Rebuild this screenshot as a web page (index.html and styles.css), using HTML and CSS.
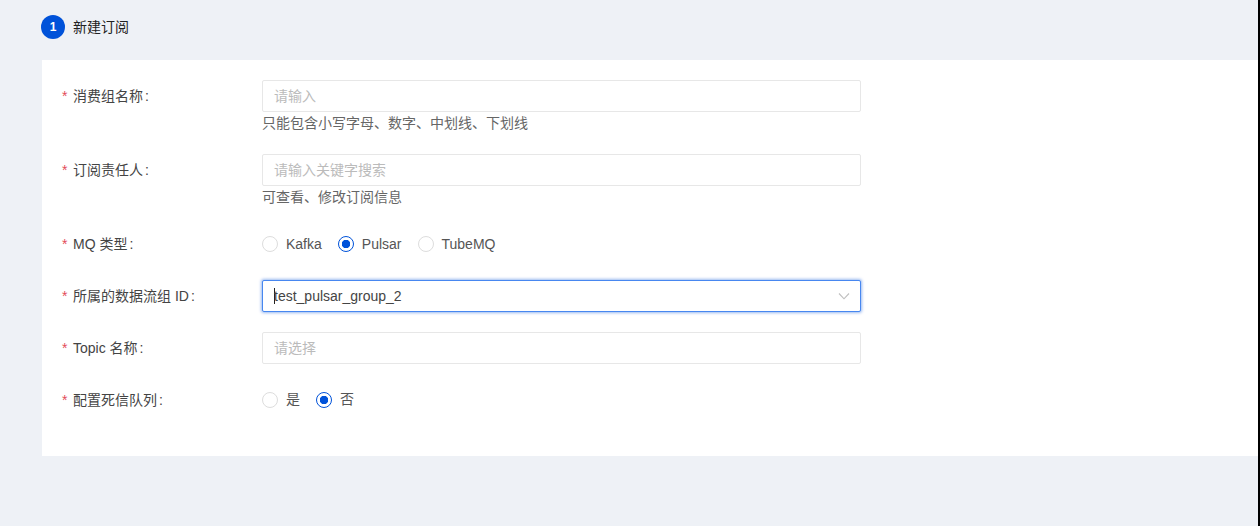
FILE: index.html
```html
<!DOCTYPE html>
<html lang="zh-CN">
<head>
<meta charset="utf-8">
<title>新建订阅</title>
<link rel="stylesheet" href="styles.css">
</head>
<body>
<div class="page">
  <main class="main">
    <div class="steps">
      <span class="step-num">1</span>
      <span class="step-title">新建订阅</span>
    </div>
    <form class="card">
      <div class="item help-item">
        <label class="label"><i class="star">*</i>消费组名称<span class="colon">:</span></label>
        <div class="control">
          <div class="input placeholder"><span class="cjk">请输入</span></div>
          <div class="help">只能包含小写字母、数字、中划线、下划线</div>
        </div>
      </div>
      <div class="item help-item">
        <label class="label"><i class="star">*</i>订阅责任人<span class="colon">:</span></label>
        <div class="control">
          <div class="input placeholder"><span class="cjk">请输入关键字搜索</span></div>
          <div class="help">可查看、修改订阅信息</div>
        </div>
      </div>
      <div class="item">
        <label class="label"><i class="star">*</i>MQ 类型<span class="colon">:</span></label>
        <div class="control radios">
          <span class="radio"><span class="dot"></span>Kafka</span>
          <span class="radio on"><span class="dot"></span>Pulsar</span>
          <span class="radio"><span class="dot"></span>TubeMQ</span>
        </div>
      </div>
      <div class="item">
        <label class="label"><i class="star">*</i>所属的数据流组 ID<span class="colon">:</span></label>
        <div class="control">
          <div class="input focused"><span class="caret"></span><span class="value">test_pulsar_group_2</span>
            <svg class="arrow" width="12" height="12" viewBox="0 0 12 12" fill="none"><path d="M1 3.5 6 8.8 11 3.5" stroke="#bfbfbf" stroke-width="1.1"/></svg>
          </div>
        </div>
      </div>
      <div class="item">
        <label class="label"><i class="star">*</i>Topic 名称<span class="colon">:</span></label>
        <div class="control">
          <div class="input placeholder"><span class="cjk">请选择</span></div>
        </div>
      </div>
      <div class="item">
        <label class="label"><i class="star">*</i>配置死信队列<span class="colon">:</span></label>
        <div class="control radios">
          <span class="radio"><span class="dot"></span><span class="cjk-lift">是</span></span>
          <span class="radio on"><span class="dot"></span><span class="cjk-lift">否</span></span>
        </div>
      </div>
    </form>
  </main>
  <div class="edge"></div>
</div>
</body>
</html>
```
FILE: styles.css
```css
* { box-sizing: border-box; }
html, body { margin: 0; height: 100%; }
body {
  font-family: "Liberation Sans", "Noto Sans CJK SC", sans-serif;
  font-size: 14px;
  color: #333;
  overflow: hidden;
}
.page { display: flex; height: 526px; }
.main { flex: 1; min-width: 0; background: #eef1f6; padding: 15px 0 0 41px; }
.edge { width: 2px; background: #000; }
.steps { display: flex; align-items: center; height: 24px; gap: 8px; color: #222; }
.step-num {
  width: 24px; height: 24px; border-radius: 50%;
  background: #0052d9; color: #fff;
  display: flex; align-items: center; justify-content: center;
  font-size: 12px; font-weight: 700;
}
.step-title { font-size: 14px; margin-bottom: 2px; }
.card { margin: 21px 0 0 1px; background: #fff; padding: 20px 20px 40px 20px; }
.item { display: flex; margin-bottom: 20px; }
.item:last-child { margin-bottom: 0; }
.label { width: 200px; height: 32px; line-height: 32px; color: #444; white-space: nowrap; }
.star { font-style: normal; color: #e34d59; display: inline-block; width: 11px; font-size: 14px; }
.colon { margin-left: 2px; }
.control { width: 599px; }
.input {
  height: 32px; border: 1px solid #e7e7e7; border-radius: 2px;
  padding: 0 11px; line-height: 30px; background: #fff;
  position: relative; display: flex; align-items: center;
}
.placeholder { color: #bbb; }
.cjk { margin-bottom: 1px; }
.cjk-lift { margin-bottom: 4px; }
.focused { border-color: #4787f0; box-shadow: 0 0 3px 1px rgba(0, 82, 217, 0.4); color: #444; }
.caret { width: 1px; height: 16px; background: #222; margin-right: -1px; }
.value { flex: 1; }
.arrow { margin-right: -1px; }
.help { height: 22px; line-height: 22px; color: #666; font-size: 14px; }
.radios { display: flex; align-items: center; height: 32px; gap: 16px; color: #555; }
.radio { display: inline-flex; align-items: center; gap: 8px; }
.dot {
  width: 16px; height: 16px; border-radius: 50%;
  border: 1px solid #ddd; background: #fff; flex: none;
}
.on .dot {
  border-color: #0052d9;
  background: radial-gradient(circle, #0052d9 0 4px, #fff 4.5px);
}
```
